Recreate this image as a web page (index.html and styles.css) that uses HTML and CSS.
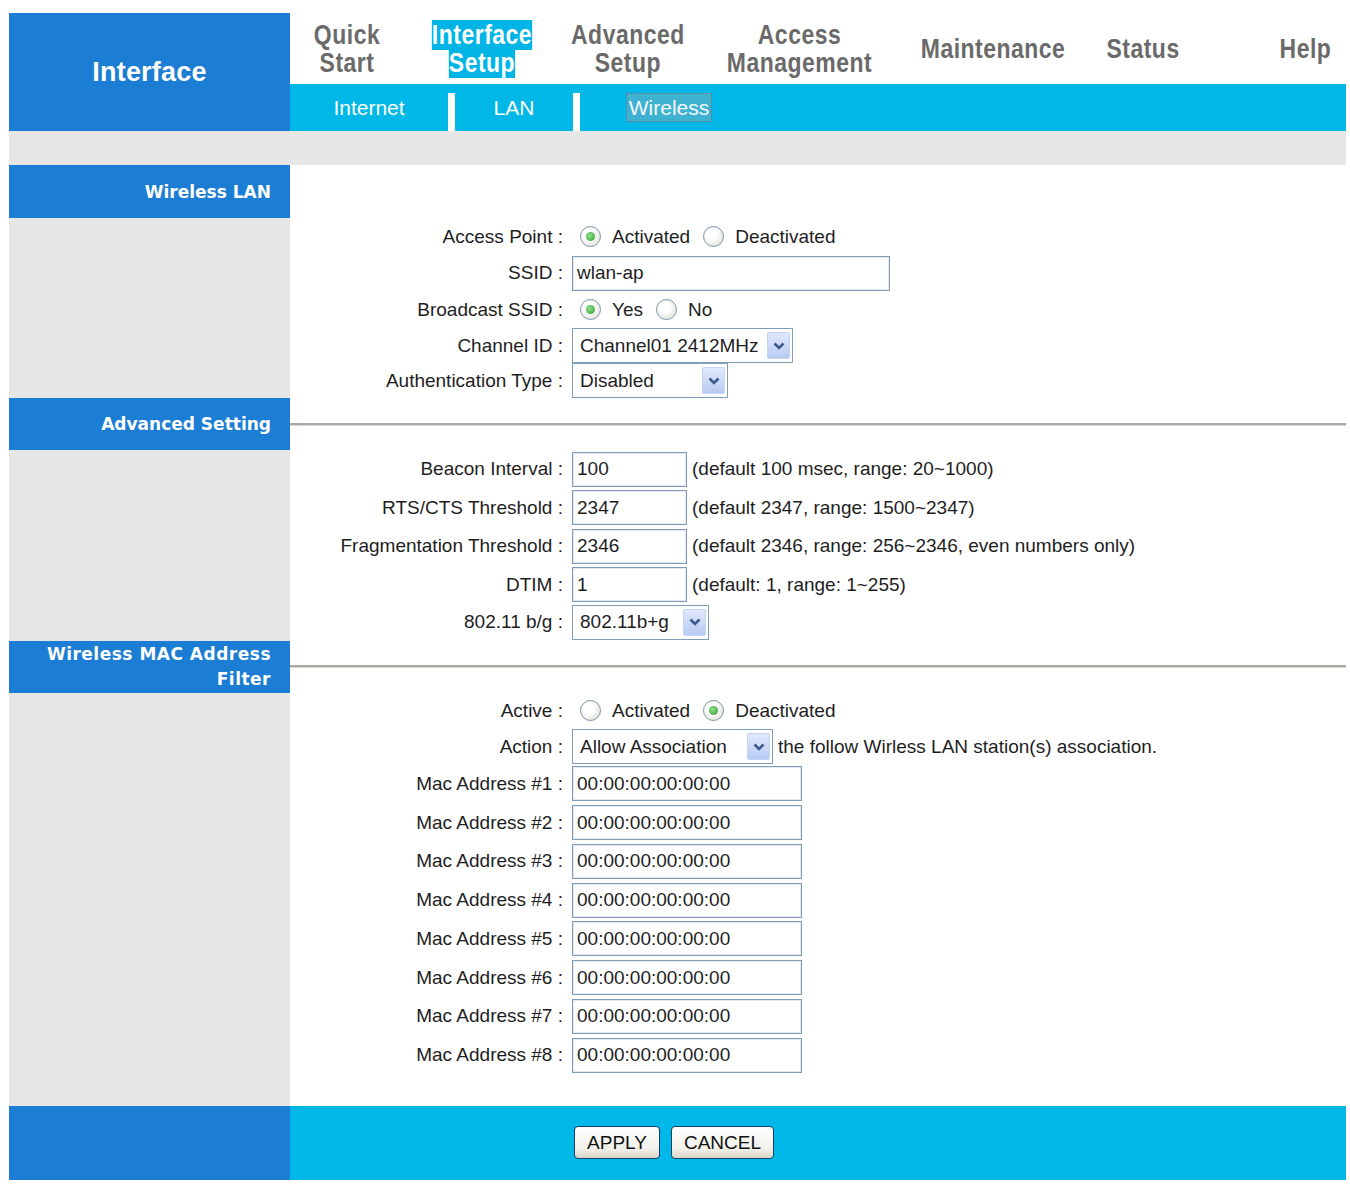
FILE: index.html
```html
<!DOCTYPE html>
<html>
<head>
<meta charset="utf-8">
<title>Interface Setup - Wireless</title>
<link rel="stylesheet" href="styles.css">
</head>
<body>
<div class="page">
  <div class="top">
    <div class="brand">Interface</div>
    <div class="navs">
      <div class="mainnav">
        <div class="mi w1"><span class="mt">Quick<br>Start</span></div>
        <div class="mi w2"><span class="mt"><span class="sel">Interface<br>Setup</span></span></div>
        <div class="mi w3"><span class="mt">Advanced<br>Setup</span></div>
        <div class="mi w4"><span class="mt">Access<br>Management</span></div>
        <div class="mi w5"><span class="mt">Maintenance</span></div>
        <div class="mi w6"><span class="mt">Status</span></div>
        <div class="mi w7"><span class="mt">Help</span></div>
      </div>
      <div class="subnav">
        <div class="si s1">Internet</div>
        <div class="sep"></div>
        <div class="si s2">LAN</div>
        <div class="sep"></div>
        <div class="si s3"><span class="cur">Wireless</span></div>
      </div>
    </div>
  </div>
  <div class="greybar"></div>

  <div class="section">
    <div class="side"><div class="shead">Wireless LAN</div></div>
    <div class="main">
      <div class="mhead"></div>
      <div class="row h37">
        <div class="lbl">Access Point :</div>
        <div class="val">
          <span class="radio on"></span><span class="rt">Activated</span>
          <span class="radio"></span><span class="rt">Deactivated</span>
        </div>
      </div>
      <div class="row h36">
        <div class="lbl">SSID :</div>
        <div class="val"><div class="input w318">wlan-ap</div></div>
      </div>
      <div class="row h37">
        <div class="lbl">Broadcast SSID :</div>
        <div class="val">
          <span class="radio on"></span><span class="rt">Yes</span>
          <span class="radio"></span><span class="rt">No</span>
        </div>
      </div>
      <div class="row h35">
        <div class="lbl">Channel ID :</div>
        <div class="val"><div class="select w221"><span class="stext">Channel01 2412MHz</span><span class="arrow"><svg width="12" height="8" viewBox="0 0 12 8"><path d="M1.5 1.5 L6 6 L10.5 1.5" fill="none" stroke="#3b5a8c" stroke-width="2.6"/></svg></span></div></div>
      </div>
      <div class="row h35">
        <div class="lbl">Authentication Type :</div>
        <div class="val"><div class="select w156"><span class="stext">Disabled</span><span class="arrow"><svg width="12" height="8" viewBox="0 0 12 8"><path d="M1.5 1.5 L6 6 L10.5 1.5" fill="none" stroke="#3b5a8c" stroke-width="2.6"/></svg></span></div></div>
      </div>
    </div>
  </div>

  <div class="section">
    <div class="side"><div class="shead">Advanced Setting</div></div>
    <div class="main">
      <div class="mhead"><div class="rule"></div></div>
      <div class="row h39">
        <div class="lbl">Beacon Interval :</div>
        <div class="val"><div class="input w115">100</div><span class="note">(default 100 msec, range: 20~1000)</span></div>
      </div>
      <div class="row h39">
        <div class="lbl">RTS/CTS Threshold :</div>
        <div class="val"><div class="input w115">2347</div><span class="note">(default 2347, range: 1500~2347)</span></div>
      </div>
      <div class="row h39">
        <div class="lbl">Fragmentation Threshold :</div>
        <div class="val"><div class="input w115">2346</div><span class="note">(default 2346, range: 256~2346, even numbers only)</span></div>
      </div>
      <div class="row h38">
        <div class="lbl">DTIM :</div>
        <div class="val"><div class="input w115">1</div><span class="note">(default: 1, range: 1~255)</span></div>
      </div>
      <div class="row h37">
        <div class="lbl">802.11 b/g :</div>
        <div class="val"><div class="select w137"><span class="stext">802.11b+g</span><span class="arrow"><svg width="12" height="8" viewBox="0 0 12 8"><path d="M1.5 1.5 L6 6 L10.5 1.5" fill="none" stroke="#3b5a8c" stroke-width="2.6"/></svg></span></div></div>
      </div>
    </div>
  </div>

  <div class="section">
    <div class="side"><div class="shead two">Wireless MAC Address<br>Filter</div></div>
    <div class="main">
      <div class="mhead"><div class="rule"></div></div>
      <div class="row h36">
        <div class="lbl">Active :</div>
        <div class="val">
          <span class="radio"></span><span class="rt">Activated</span>
          <span class="radio on"></span><span class="rt">Deactivated</span>
        </div>
      </div>
      <div class="row h36">
        <div class="lbl">Action :</div>
        <div class="val"><div class="select w201"><span class="stext">Allow Association</span><span class="arrow"><svg width="12" height="8" viewBox="0 0 12 8"><path d="M1.5 1.5 L6 6 L10.5 1.5" fill="none" stroke="#3b5a8c" stroke-width="2.6"/></svg></span></div><span class="note">the follow Wirless LAN station(s) association.</span></div>
      </div>
      <div class="row mac"><div class="lbl">Mac Address #1 :</div><div class="val"><div class="input w230">00:00:00:00:00:00</div></div></div>
      <div class="row mac"><div class="lbl">Mac Address #2 :</div><div class="val"><div class="input w230">00:00:00:00:00:00</div></div></div>
      <div class="row mac"><div class="lbl">Mac Address #3 :</div><div class="val"><div class="input w230">00:00:00:00:00:00</div></div></div>
      <div class="row mac"><div class="lbl">Mac Address #4 :</div><div class="val"><div class="input w230">00:00:00:00:00:00</div></div></div>
      <div class="row mac"><div class="lbl">Mac Address #5 :</div><div class="val"><div class="input w230">00:00:00:00:00:00</div></div></div>
      <div class="row mac"><div class="lbl">Mac Address #6 :</div><div class="val"><div class="input w230">00:00:00:00:00:00</div></div></div>
      <div class="row mac"><div class="lbl">Mac Address #7 :</div><div class="val"><div class="input w230">00:00:00:00:00:00</div></div></div>
      <div class="row mac"><div class="lbl">Mac Address #8 :</div><div class="val"><div class="input w230">00:00:00:00:00:00</div></div></div>
      <div class="tail"></div>
    </div>
  </div>

  <div class="footer">
    <div class="fl"></div>
    <div class="fr">
      <span class="btn b1">APPLY</span>
      <span class="btn b2">CANCEL</span>
    </div>
  </div>
</div>
</body>
</html>
```
FILE: styles.css
```css
* { box-sizing: border-box; }
html, body { margin: 0; padding: 0; background: #fff; }
body { font-family: "Liberation Sans", Arial, sans-serif; color: #1e1e1e; }
.page { width: 1337px; margin: 13px 0 0 9px; }

.top { display: flex; height: 118px; }
.brand {
  width: 281px; background: #1b7dd3; color: #fff;
  font: bold 27px "Liberation Sans", Arial, sans-serif;
  display: flex; align-items: center; justify-content: center;
  letter-spacing: 0.2px;
}
.navs { flex: 1; display: flex; flex-direction: column; }
.mainnav { height: 71px; display: flex; background: #fff; }
.mi {
  display: flex; align-items: center; justify-content: center; text-align: center;
  font-family: "Liberation Sans", Arial, sans-serif;
  font-weight: bold; font-size: 27px; line-height: 28px; color: #6a6a6a;
  letter-spacing: 0.6px;
}
.mt { display: inline-block; transform: scaleX(0.85); white-space: nowrap; }
.w1 { width: 114px; } .w2 { width: 156px; } .w3 { width: 136px; } .w4 { width: 208px; }
.w5 { width: 178px; } .w6 { width: 122px; } .w7 { width: 142px; justify-content: flex-end; padding-right: 10px; }
.sel { background: #00b5e6; color: #fff; }

.subnav { height: 47px; background: #00b8e8; display: flex; align-items: stretch; }
.si {
  display: flex; align-items: center; justify-content: center;
  color: #fff; font-size: 21px;
}
.s1 { width: 158px; } .s2 { width: 118px; } .s3 { width: 178px; }
.sep { width: 7px; background: #fff; margin-top: 9px; }
.cur { border: 1px dotted #5c6f78; background: #3fb2d2; padding: 0 2px; line-height: 27px; color: #f4f8fa; }

.greybar { height: 34px; background: #e6e6e6; }

.section { display: flex; }
.side { width: 281px; background: #e6e6e6; }
.shead {
  height: 52px; background: #1b7dd3; color: #fff;
  font: bold 17px "DejaVu Sans", Verdana, sans-serif;
  display: flex; align-items: center; justify-content: flex-end; text-align: right;
  padding-right: 19px; letter-spacing: 0;
}
.section:nth-of-type(3) .shead { height: 53px; }
.shead.two { line-height: 25px; letter-spacing: 0.5px; }
.main { flex: 1; background: #fff; }
.mhead { height: 52px; display: flex; align-items: center; }
.section:nth-of-type(3) .mhead { height: 53px; }
.rule { height: 3px; width: 100%; background: #a9a9a2; border-bottom: 1px solid #d8d8d2; }

.row { display: flex; align-items: center; font-size: 19px; }
.h35 { height: 35px; } .h36 { height: 36px; } .h37 { height: 37px; } .h38 { height: 38px; } .h39 { height: 38.5px; }
.mac { height: 38.75px; }
.lbl { width: 273px; text-align: right; white-space: nowrap; }
.val { margin-left: 9px; display: flex; align-items: center; white-space: nowrap; }

.input {
  height: 35px; border: 1px solid #7f9db9; box-shadow: inset 0 0 0 1px #e4e9ef;
  padding: 0 4px; display: flex; align-items: center; background: #fff;
}
.w318 { width: 318px; } .w115 { width: 115px; } .w230 { width: 230px; }
.note { margin-left: 5px; }

.select {
  height: 35px; border: 1px solid #7f9db9; background: #fff;
  display: flex; align-items: center; justify-content: space-between;
  padding-left: 7px; padding-right: 2px;
}
.w221 { width: 221px; } .w156 { width: 156px; } .w137 { width: 137px; } .w201 { width: 201px; }
.arrow {
  width: 23px; height: 27px; border: 1px solid #c6d4f3; border-radius: 2px;
  background: linear-gradient(#dfe8fc, #b9cbf4);
  display: flex; align-items: center; justify-content: center;
}

.radio {
  width: 21px; height: 21px; border-radius: 50%; border: 1px solid #7f93aa;
  background: radial-gradient(circle at 40% 40%, #ffffff 30%, #d6d6cf 100%);
  margin-left: 8px; margin-right: 11px; display: inline-flex; align-items: center; justify-content: center;
}
.radio.on::after {
  content: ""; width: 9px; height: 9px; border-radius: 50%;
  background: radial-gradient(circle at 40% 40%, #8ee08a, #2e9a2e);
}
.rt + .radio { margin-left: 13px; }

.tail { height: 31px; }

.footer { display: flex; height: 74px; }
.fl { width: 281px; background: #1b7dd3; }
.fr { flex: 1; background: #00b8e8; display: flex; align-items: center; padding-left: 284px; }
.btn {
  height: 33px; border: 1px solid #1d3f66; border-radius: 4px;
  background: linear-gradient(#ffffff, #f1f0ea 70%, #d9d6cb);
  font-size: 19px; color: #111; display: inline-flex; align-items: center; justify-content: center;
}
.b1 { width: 86px; }
.b2 { width: 103px; margin-left: 11px; }
```
